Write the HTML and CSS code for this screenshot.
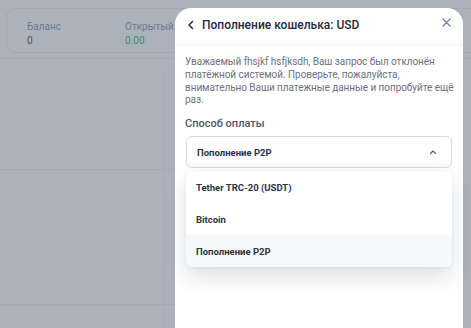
FILE: index.html
```html
<!DOCTYPE html>
<html lang="ru">
<head>
<meta charset="utf-8">
<link rel="stylesheet" href="styles.css">
</head>
<body>
<div class="page">
  <div class="top">
    <div class="stats">
      <div class="stat">
        <div class="stat-label">Баланс</div>
        <div class="stat-value">0</div>
      </div>
      <div class="stat">
        <div class="stat-label">Открытый PnL</div>
        <div class="stat-value green">0.00</div>
      </div>
    </div>
  </div>
  <div class="body">
    <div class="left">
      <div class="row r1"></div>
      <div class="row r2"></div>
      <div class="row r3"></div>
    </div>
    <div class="right"></div>
  </div>
</div>

<div class="modal">
  <div class="modal-head">
    <div class="head-left">
      <svg class="back" width="8" height="10" viewBox="0 0 8 10"><path d="M5.5 1.5 L2 5 L5.5 8.5" fill="none" stroke="#1f2a44" stroke-width="1.5" stroke-linecap="round" stroke-linejoin="round"/></svg>
      <span class="title">Пополнение кошелька: USD</span>
    </div>
    <svg class="close" width="9" height="9" viewBox="0 0 9 9"><path d="M1 1 L8 8 M8 1 L1 8" stroke="#6b87b0" stroke-width="1.4" stroke-linecap="round"/></svg>
  </div>
  <div class="modal-body">
    <p class="msg">Уважаемый fhsjkf hsfjksdh, Ваш запрос был отклонён платёжной системой. Проверьте, пожалуйста, внимательно Ваши платежные данные и попробуйте ещё раз.</p>
    <div class="label">Способ оплаты</div>
    <div class="select-wrap">
      <div class="select">
        <span>Пополнение P2P</span>
        <svg width="8" height="6" viewBox="0 0 8 6"><path d="M1.5 4.5 L4 2 L6.5 4.5" fill="none" stroke="#5a6478" stroke-width="1.3" stroke-linecap="round" stroke-linejoin="round"/></svg>
      </div>
      <div class="dropdown">
        <div class="opt">Tether TRC-20 (USDT)</div>
        <div class="opt">Bitcoin</div>
        <div class="opt active">Пополнение P2P</div>
      </div>
    </div>
  </div>
</div>
</body>
</html>
```
FILE: styles.css
```css
* { box-sizing: border-box; margin: 0; padding: 0; }
html, body { width: 471px; height: 328px; overflow: hidden; }
body {
  background: #abb2bb;
  font-family: Roboto, "Noto Sans", "Liberation Sans", sans-serif;
  position: relative;
}
.page { width: 471px; height: 328px; overflow: hidden; }
.top {
  height: 59px;
  padding: 8px 0 0 6px;
  border-bottom: 1px solid #a3aab3;
}
.stats {
  display: flex;
  width: 480px;
  height: 45px;
  border: 1px solid #a2a9b3;
  border-radius: 10px;
  padding: 11px 0 0 20px;
}
.stat { width: 98px; }
.stat-label { font-size: 10px; color: #6b7b95; line-height: 13px; }
.stat-value { font-size: 10px; color: #4f5866; line-height: 13px; margin-top: 1px; }
.stat-value.green { color: #3d8a7d; }
.body { display: flex; height: 269px; }
.left { width: 164px; padding-top: 17px; }
.right { border-left: 1px solid #a3aab3; flex: 1; margin-top: 17px; }
.row { border-bottom: 1px solid #a3aab3; }
.r1 { height: 94px; width: 175px; }
.r2 { height: 135px; width: 175px; }

.modal {
  position: absolute;
  left: 175px;
  top: 8px;
  width: 288px;
  height: 320px;
  background: #fff;
  border-radius: 16px 16px 0 0;
}
.modal-head {
  height: 37px;
  border-bottom: 1px solid #eceef2;
  display: flex;
  align-items: center;
  justify-content: space-between;
  padding: 0 12px 2px 12px;
}
.head-left { display: flex; align-items: center; gap: 7px; }
.back { display: block; }
.title { font-size: 12px; font-weight: 500; color: #1f2a44; }
.close { display: block; margin-top: -5px; margin-right: 0; }
.modal-body { padding: 11px 6px 0 10px; }
.msg { font-size: 10px; line-height: 12.8px; color: #6b7280; letter-spacing: -0.05px; }
.label { font-size: 11px; font-weight: 500; color: #4b5563; margin-top: 10px; line-height: 14px; }
.select-wrap { margin-top: 5px; padding: 0 5px 0 1px; }
.select {
  height: 32px;
  border: 1px solid #d4d9e2;
  border-radius: 6px;
  display: flex;
  align-items: center;
  justify-content: space-between;
  padding: 0 14px 0 10px;
  font-size: 9.5px;
  font-weight: 700;
  color: #2b3447;
  box-shadow: inset 0 -6px 10px -6px rgba(0,0,0,0.05);
}
.select svg { display: block; }
.dropdown {
  margin-top: 3px;
  border-radius: 6px;
  background: #fff;
  box-shadow: 0 10px 22px rgba(30,40,70,0.14), 0 1px 3px rgba(0,0,0,0.06);
  overflow: hidden;
}
.opt {
  height: 32px;
  display: flex;
  align-items: center;
  padding-left: 10px;
  font-size: 9.5px;
  font-weight: 700;
  color: #2b3447;
}
.opt.active { background: #f7f8fa; }
```
